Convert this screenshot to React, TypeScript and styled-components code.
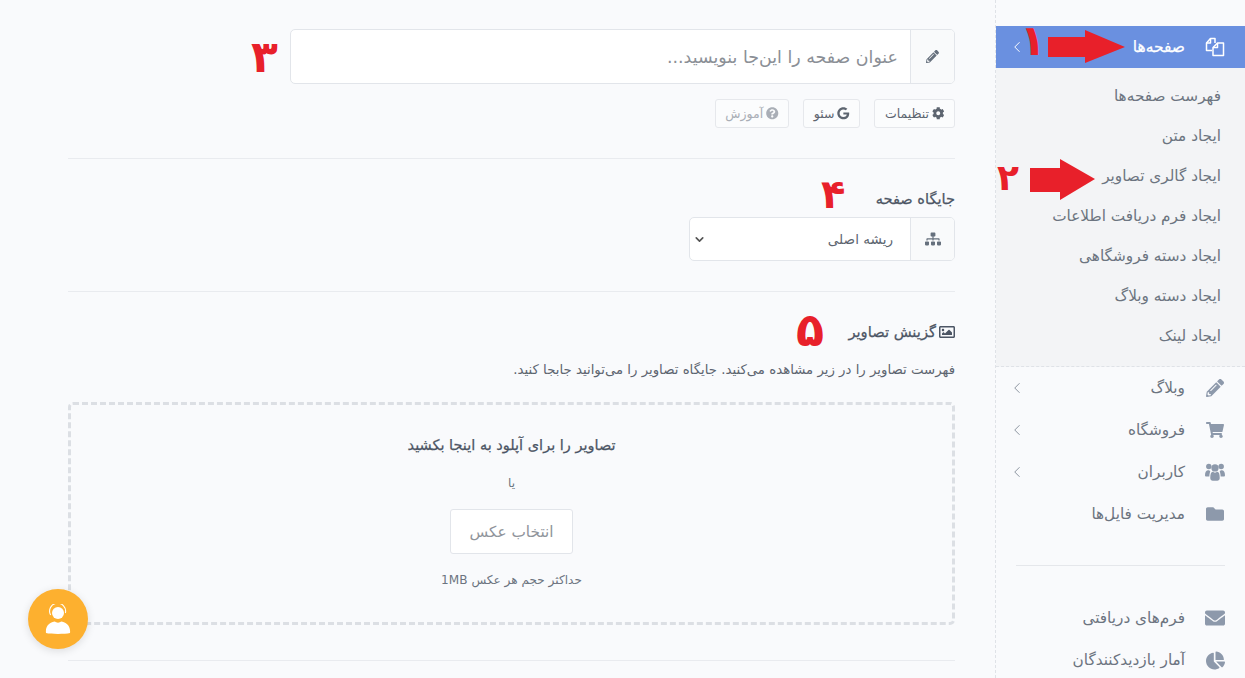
import { ReactNode } from "react";
import styled, { createGlobalStyle } from "styled-components";
import {
  FaChartPie,
  FaCog,
  FaEnvelope,
  FaFolder,
  FaGoogle,
  FaPencilAlt,
  FaQuestionCircle,
  FaRegImage,
  FaShoppingCart,
  FaSitemap,
} from "react-icons/fa";
import { ChevronDown, ChevronLeft } from "lucide-react";

const GlobalStyle = createGlobalStyle`
  html, body {
    margin: 0;
    height: 100%;
    overflow: hidden;
    background: #f9fafc;
    font-family: "DejaVu Sans", "Noto Sans", sans-serif;
    color: #4c5564;
  }
  * { box-sizing: border-box; }
`;

const Page = styled.div`
  direction: rtl;
  position: relative;
  display: flex;
  width: 1245px;
  height: 678px;
  overflow: hidden;
`;

const Sidebar = styled.aside`
  width: 250px;
  flex: none;
  padding-top: 26px;
  border-left: 1px dashed #dfe2e7;
`;

const ActiveItem = styled.div`
  height: 42px;
  display: flex;
  align-items: center;
  padding: 0 20px 0 12px;
  background: #6a90e0;
  color: #fff;
  font-size: 15.5px;
  -webkit-text-stroke: 0.25px #fff;
`;

const SubMenu = styled.div`
  background: #f3f4f6;
  padding: 8px 0 10px;
  border-bottom: 1px dashed #dfe2e7;
`;

const SubItem = styled.div`
  height: 40px;
  line-height: 40px;
  padding-right: 24px;
  font-size: 15.3px;
  color: #6c7480;
`;

const MenuItem = styled.div`
  height: 42px;
  display: flex;
  align-items: center;
  padding: 0 20px 0 12px;
  font-size: 15.3px;
  color: #6c7480;
`;

const MenuIcon = styled.span<{ $size?: number }>`
  width: 20px;
  height: 20px;
  display: flex;
  align-items: center;
  justify-content: center;
  margin-left: 20px;
  color: #8d99ab;
  font-size: ${(p) => p.$size ?? 18}px;
  ${ActiveItem} & { color: #fff; }
`;

const Arrow = styled(ChevronLeft)`
  margin-right: auto;
  width: 18px;
  height: 18px;
  stroke-width: 1.3;
  color: #8a929e;
  ${ActiveItem} & { color: #fff; }
`;

const MenuDivider = styled.hr`
  border: 0;
  border-top: 1px solid #e5e7eb;
  margin: 30px 20px 31px;
`;

const Main = styled.main`
  width: 887px;
  margin-right: 40px;
  padding-top: 29px;
`;

const InputGroup = styled.div<{ $width: number; $height: number }>`
  display: flex;
  width: ${(p) => p.$width}px;
  height: ${(p) => p.$height}px;
  border: 1px solid #e2e5ea;
  border-radius: 5px;
  background: #fff;
  overflow: hidden;
`;

const Addon = styled.div<{ $size?: number }>`
  width: 44px;
  flex: none;
  display: flex;
  align-items: center;
  justify-content: center;
  background: #f9fafb;
  border-left: 1px solid #e2e5ea;
  color: #66707d;
  font-size: ${(p) => p.$size ?? 13}px;
`;

const TitlePlaceholder = styled.div`
  flex: 1;
  padding-right: 12px;
  display: flex;
  align-items: center;
  font-size: 17.4px;
  color: #8b8f96;
`;

const ToolRow = styled.div`
  display: flex;
  gap: 14px;
  margin-top: 15px;
`;

const ToolButton = styled.div<{ $muted?: boolean }>`
  height: 29px;
  padding: 0 9.5px;
  display: flex;
  align-items: center;
  gap: 3px;
  border: 1px solid #e6e8ec;
  border-radius: 3px;
  background: #fbfcfd;
  font-size: 12.5px;
  color: ${(p) => (p.$muted ? "#a9aeb6" : "#5d6570")};
`;

const Rule = styled.hr<{ $top: number; $bottom: number }>`
  border: 0;
  border-top: 1px solid #e9ebef;
  margin: ${(p) => p.$top}px 0 ${(p) => p.$bottom}px;
`;

const Label = styled.div`
  font-size: 14.6px;
  -webkit-text-stroke: 0.25px #4c5564;
  color: #4c5564;
  line-height: 18px;
  margin-bottom: 9px;
`;

const SelectValue = styled.div`
  flex: 1;
  display: flex;
  align-items: center;
  justify-content: space-between;
  padding: 0 17px 0 3px;
  font-size: 13.6px;
  color: #5d6570;
`;

const SectionTitle = styled(Label)`
  display: flex;
  align-items: center;
  gap: 3px;
  margin-bottom: 0;
  font-size: 14.7px;
`;

const Hint = styled.p`
  margin: 20px 0 23px;
  font-size: 13.3px;
  line-height: 18px;
  color: #5d6570;
`;

const DropZone = styled.div`
  height: 223px;
  border: 3px dashed #dcdfe4;
  border-radius: 5px;
  display: flex;
  flex-direction: column;
  align-items: center;
  padding-top: 30px;
`;

const DropTitle = styled.div`
  font-size: 14.5px;
  -webkit-text-stroke: 0.25px #4c5564;
  line-height: 20px;
  color: #4c5564;
`;

const Or = styled.div`
  margin-top: 18px;
  font-size: 12px;
  line-height: 20px;
  color: #6c7480;
`;

const PickButton = styled.div`
  margin-top: 16px;
  width: 123px;
  height: 45px;
  display: flex;
  align-items: center;
  justify-content: center;
  background: #fff;
  border: 1px solid #e2e5ea;
  border-radius: 3px;
  font-size: 15.3px;
  color: #8f949b;
`;

const MaxSize = styled.div`
  margin-top: 16px;
  font-size: 12.1px;
  line-height: 20px;
  color: #6c7480;
`;

const SupportButton = styled.div`
  position: absolute;
  left: 28px;
  top: 589px;
  width: 60px;
  height: 60px;
  border-radius: 50%;
  background: #fdb02f;
  box-shadow: 0 2px 8px rgba(0, 0, 0, 0.12);
  display: flex;
  align-items: center;
  justify-content: center;
`;

const Mark = styled.span<{ $x: number; $y: number; $size: number }>`
  position: absolute;
  left: ${(p) => p.$x}px;
  top: ${(p) => p.$y}px;
  font-size: ${(p) => p.$size}px;
  line-height: 1;
  font-weight: bold;
  color: #e8202a;
`;

const RedArrow = styled.svg<{ $x: number; $y: number }>`
  position: absolute;
  left: ${(p) => p.$x}px;
  top: ${(p) => p.$y}px;
`;

const PagesIcon = () => (
  <svg width="22" height="22" viewBox="0 0 20 20" fill="none" stroke="#fff" strokeWidth="1.5" strokeLinejoin="round">
    <path d="M7 13.5H1.5V6L5.5 1.5H10V6" />
    <path d="M5.5 1.5V6H1.5" />
    <path d="M8 18.5V10.5L12.5 6H18.5V18.5Z" />
    <path d="M12.5 6V10.5H8" />
  </svg>
);

const UsersIcon = () => (
  <svg width="22" height="20" viewBox="0 0 22 20" fill="currentColor">
    <circle cx="4.2" cy="4" r="3" />
    <circle cx="17.8" cy="4" r="3" />
    <circle cx="11" cy="5.5" r="4" />
    <path d="M0 13.5C0 9.5 1.5 8 3.5 8C4.5 8 5 8.5 5.8 8.8C5.4 10.5 4.8 12 4.8 15H1.5C.5 15 0 14.5 0 13.5Z" />
    <path d="M22 13.5C22 9.5 20.5 8 18.5 8C17.5 8 17 8.5 16.2 8.8C16.6 10.5 17.2 12 17.2 15H20.5C21.5 15 22 14.5 22 13.5Z" />
    <path d="M5.8 16.5C5.8 12.5 6.5 10 8.5 9.8C9.2 10.4 10 10.7 11 10.7C12 10.7 12.8 10.4 13.5 9.8C15.5 10 16.2 12.5 16.2 16.5C16.2 18.5 15 19.5 13.5 19.5H8.5C7 19.5 5.8 18.5 5.8 16.5Z" />
  </svg>
);

const SupportIcon = () => (
  <svg width="26" height="30" viewBox="0 0 26 30" fill="#fff">
    <circle cx="13" cy="9" r="6" />
    <path d="M5.6 11A8 8 0 1 1 20.4 9" fill="none" stroke="#fff" strokeWidth="1.1" />
    <path d="M1 29C0 21 6 18 10 17.5C11 19 15 19 16 17.5C20 18 26 21 25 29C20 30.2 6 30.2 1 29Z" />
  </svg>
);

const Item = ({ icon, label, more, size }: { icon: ReactNode; label: string; more?: boolean; size?: number }) => (
  <MenuItem>
    <MenuIcon $size={size}>{icon}</MenuIcon>
    {label}
    {more && <Arrow />}
  </MenuItem>
);

const subItems = [
  "فهرست صفحه‌ها",
  "ایجاد متن",
  "ایجاد گالری تصاویر",
  "ایجاد فرم دریافت اطلاعات",
  "ایجاد دسته فروشگاهی",
  "ایجاد دسته وبلاگ",
  "ایجاد لینک",
];

export default function App() {
  return (
    <Page>
      <GlobalStyle />
      <Sidebar>
        <ActiveItem>
          <MenuIcon><PagesIcon /></MenuIcon>
          صفحه‌ها
          <Arrow />
        </ActiveItem>
        <SubMenu>
          {subItems.map((s) => (
            <SubItem key={s}>{s}</SubItem>
          ))}
        </SubMenu>
        <Item icon={<FaPencilAlt />} label="وبلاگ" more />
        <Item icon={<FaShoppingCart />} label="فروشگاه" more />
        <Item icon={<UsersIcon />} label="کاربران" more />
        <Item icon={<FaFolder />} label="مدیریت فایل‌ها" />
        <MenuDivider />
        <Item icon={<FaEnvelope />} label="فرم‌های دریافتی" size={20} />
        <Item icon={<FaChartPie />} label="آمار بازدیدکنندگان" size={19} />
      </Sidebar>
      <Main>
        <InputGroup $width={665} $height={55}>
          <Addon><FaPencilAlt /></Addon>
          <TitlePlaceholder>عنوان صفحه را این‌جا بنویسید...</TitlePlaceholder>
        </InputGroup>
        <ToolRow>
          <ToolButton><FaCog /> تنظیمات</ToolButton>
          <ToolButton><FaGoogle /> سئو</ToolButton>
          <ToolButton $muted><FaQuestionCircle /> آموزش</ToolButton>
        </ToolRow>
        <Rule $top={30} $bottom={31} />
        <Label>جایگاه صفحه</Label>
        <InputGroup $width={266} $height={44}>
          <Addon $size={16}><FaSitemap /></Addon>
          <SelectValue>
            ریشه اصلی
            <ChevronDown size={13} strokeWidth={3} color="#555" />
          </SelectValue>
        </InputGroup>
        <Rule $top={30} $bottom={31} />
        <SectionTitle><FaRegImage size={16} /> گزینش تصاویر</SectionTitle>
        <Hint>فهرست تصاویر را در زیر مشاهده می‌کنید. جایگاه تصاویر را می‌توانید جابجا کنید.</Hint>
        <DropZone>
          <DropTitle>تصاویر را برای آپلود به اینجا بکشید</DropTitle>
          <Or>یا</Or>
          <PickButton>انتخاب عکس</PickButton>
          <MaxSize>حداکثر حجم هر عکس 1MB</MaxSize>
        </DropZone>
        <Rule $top={35} $bottom={0} />
      </Main>

      <SupportButton><SupportIcon /></SupportButton>

      <Mark $x={1020} $y={20} $size={42}>۱</Mark>
      <RedArrow $x={1048} $y={30} width="78" height="34" viewBox="0 0 78 34">
        <path d="M0 7H37V0L77 17L37 33V27H0Z" fill="#e8202a" />
      </RedArrow>
      <Mark $x={997} $y={160} $size={36}>۲</Mark>
      <RedArrow $x={1030} $y={159} width="66" height="42" viewBox="0 0 66 42">
        <path d="M0 9H30V0L65 20L30 41V33H0Z" fill="#e8202a" />
      </RedArrow>
      <Mark $x={251} $y={35} $size={44}>۳</Mark>
      <Mark $x={821} $y={174} $size={40}>۴</Mark>
      <Mark $x={796} $y={307} $size={46}>۵</Mark>
    </Page>
  );
}
